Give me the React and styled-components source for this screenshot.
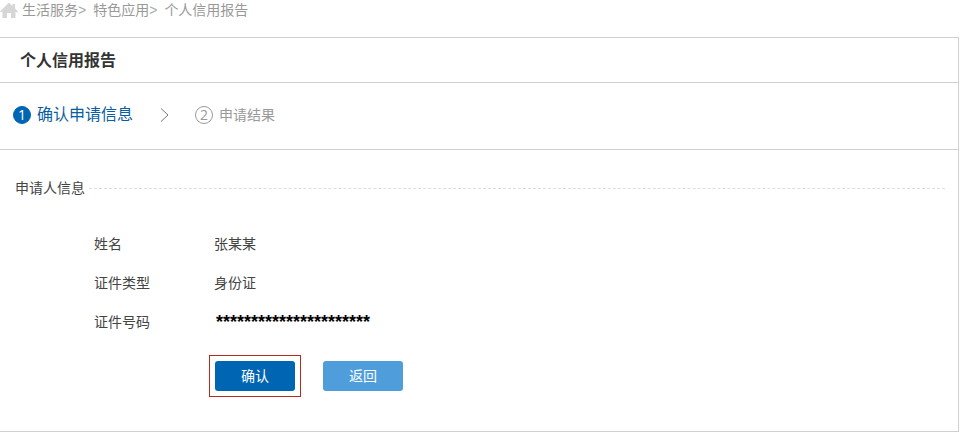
import React from "react";
import styled, { createGlobalStyle } from "styled-components";

const GlobalStyle = createGlobalStyle`
    body {
        margin: 0;
        background: #fff;
        color: #444;
        font-family: "Liberation Sans", "Noto Sans CJK SC", sans-serif;
        font-size: 14px;
        line-height: 20px;
    }
`;

const Breadcrumb = styled.nav`
    display: flex;
    align-items: center;
    height: 20px;
    margin-bottom: 17px;
    color: #999;
`;

const HomeIcon = styled.svg`
    width: 18px;
    height: 18px;
    margin-right: 4px;
`;

const Crumb = styled.a`
    color: inherit;
    text-decoration: none;
`;

const Separator = styled.span`
    margin-right: 7px;
    color: #aaa;
`;

const Panel = styled.main`
    margin-right: 3px;
    border: 1px solid #d0d0d0;
    border-left: 0;
`;

const Title = styled.h1`
    margin: 0;
    padding: 11px 20px 9px;
    border-bottom: 1px solid #d0d0d0;
    color: #333;
    font-size: 16px;
    line-height: 24px;
`;

const Steps = styled.ol`
    display: flex;
    align-items: center;
    margin: 0;
    padding: 20px 13px 22px;
    border-bottom: 1px solid #d0d0d0;
    list-style: none;
`;

const Step = styled.li`
    display: flex;
    align-items: center;
    gap: 6px;
    color: ${({ $active }) => ($active ? "#0a5ea2" : "#999")};
    font-size: ${({ $active }) => ($active ? 16 : 14)}px;
    line-height: 24px;
`;

const StepNumber = styled.span`
    box-sizing: border-box;
    width: 18px;
    height: 18px;
    border: 1px solid ${({ $active }) => ($active ? "#0066b3" : "#999")};
    border-radius: 50%;
    background: ${({ $active }) => ($active ? "#0066b3" : "#fff")};
    color: ${({ $active }) => ($active ? "#fff" : "#999")};
    font-family: "Open Sans", sans-serif;
    font-size: 14px;
    line-height: 16px;
    text-align: center;
`;

const Arrow = styled.li`
    margin: 0 26px 0 27px;

    svg {
        display: block;
    }
`;

const Form = styled.form`
    padding: 28px 13px 40px 15px;
`;

const SectionTitle = styled.h2`
    display: flex;
    align-items: center;
    gap: 4px;
    margin: 0 0 35px;
    font-size: 14px;
    font-weight: normal;
    line-height: 21px;

    &::after {
        content: "";
        flex: 1;
        border-top: 1px dashed #ddd;
    }
`;

const Details = styled.dl`
    display: grid;
    grid-template-columns: 120px 1fr;
    row-gap: 19px;
    margin: 0 0 22px;
    padding-left: 79px;
`;

const Label = styled.dt``;

const Value = styled.dd`
    margin: 0;
`;

const Masked = styled.span`
    padding-left: 2px;
    color: #000;
    font-size: 18px;
    font-weight: bold;
`;

const Actions = styled.div`
    display: flex;
    align-items: center;
    gap: 22px;
    margin-bottom: -6px;
    padding-left: 194px;
`;

const Marker = styled.div`
    display: flex;
    padding: 5px;
    border: 1px solid #b52a1c;
`;

const Button = styled.button`
    width: 80px;
    height: 30px;
    padding: 0;
    border: 0;
    border-radius: 3px;
    background: ${({ $primary }) => ($primary ? "#0066b3" : "#4f9edb")};
    color: #fff;
    font: inherit;
    cursor: pointer;
`;

const crumbs = ["生活服务", "特色应用", "个人信用报告"];

const App = () => {
    return (
        <>
            <GlobalStyle />
            <Breadcrumb>
                <HomeIcon viewBox="0 0 18 18" aria-hidden="true">
                    <path fill="#d6d6d6" d="M9 1.5 12.5 5V3h2.5v4.5l3 3-1 1-1.5-1V17H11v-5H7v5H2.5v-6.5l-1.5 1-1-1z" />
                </HomeIcon>
                {crumbs.map((name, i) => (
                    <React.Fragment key={name}>
                        <Crumb href="#">{name}</Crumb>
                        {i < crumbs.length - 1 && <Separator>&gt;</Separator>}
                    </React.Fragment>
                ))}
            </Breadcrumb>
            <Panel>
                <Title>个人信用报告</Title>
                <Steps>
                    <Step $active>
                        <StepNumber $active>1</StepNumber>
                        确认申请信息
                    </Step>
                    <Arrow aria-hidden="true">
                        <svg width="9" height="14" viewBox="0 0 9 14">
                            <path d="M1 .5 8 7 1 13.5" fill="none" stroke="#777" />
                        </svg>
                    </Arrow>
                    <Step>
                        <StepNumber>2</StepNumber>
                        申请结果
                    </Step>
                </Steps>
                <Form onSubmit={(e) => e.preventDefault()}>
                    <SectionTitle>申请人信息</SectionTitle>
                    <Details>
                        <Label>姓名</Label>
                        <Value>张某某</Value>
                        <Label>证件类型</Label>
                        <Value>身份证</Value>
                        <Label>证件号码</Label>
                        <Value>
                            <Masked>{"*".repeat(22)}</Masked>
                        </Value>
                    </Details>
                    <Actions>
                        <Marker>
                            <Button type="submit" $primary>确认</Button>
                        </Marker>
                        <Button type="button">返回</Button>
                    </Actions>
                </Form>
            </Panel>
        </>
    );
};

export default App;
